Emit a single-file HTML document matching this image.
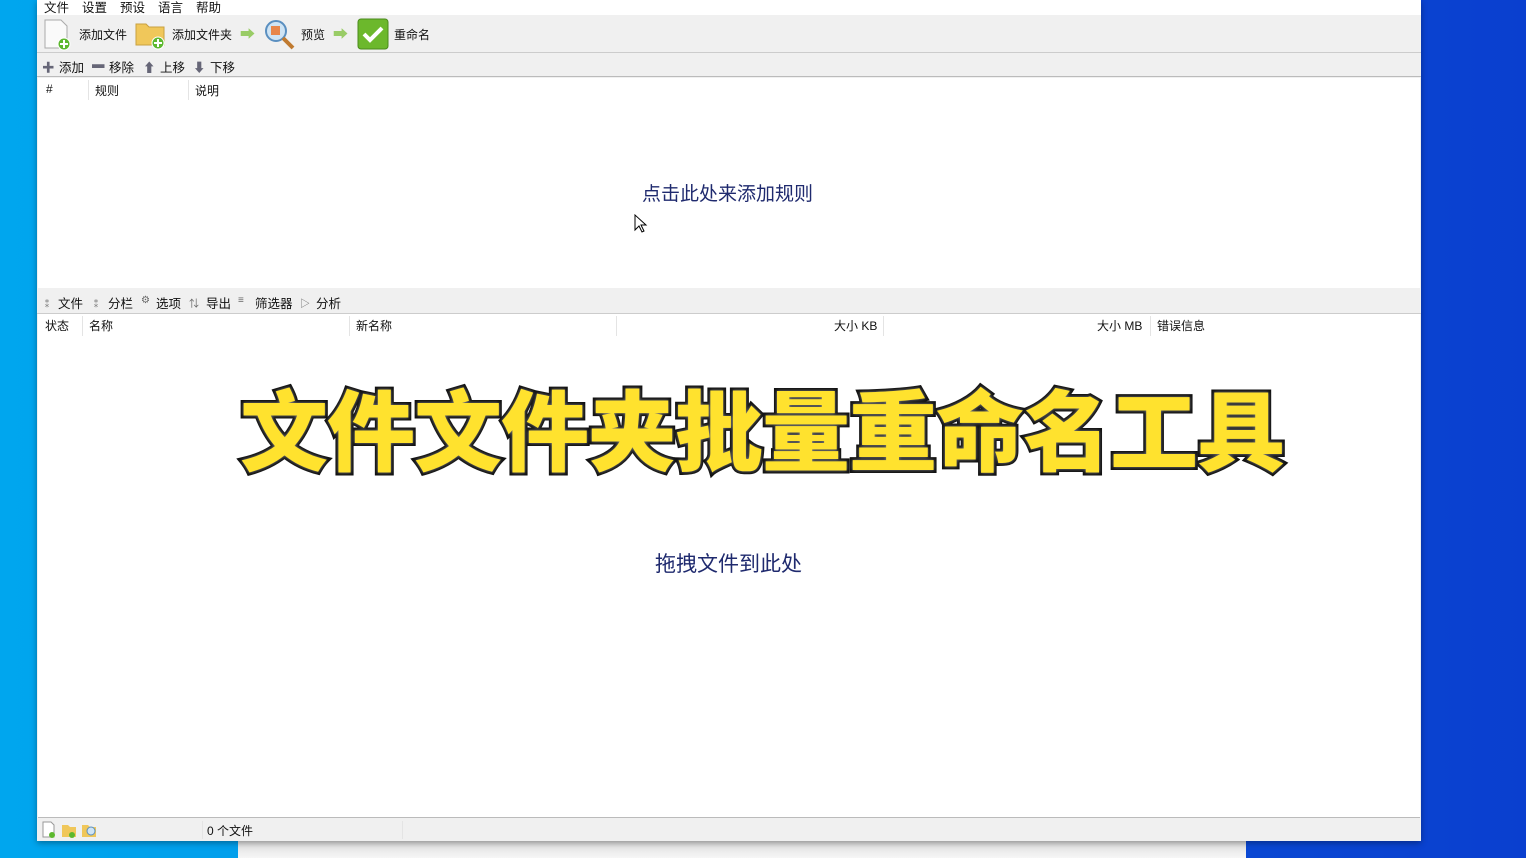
<!DOCTYPE html>
<html><head><meta charset="utf-8"><style>
*{margin:0;padding:0;box-sizing:border-box}
body{width:1526px;height:858px;overflow:hidden;position:relative;font-family:"Liberation Sans","Noto Sans CJK SC",sans-serif;font-size:12px;color:#111;background:linear-gradient(90deg,#00a6ee 0,#0390e6 700px,#0a4fd6 1000px,#0a3fcf 1526px)}
.win{position:absolute;left:37px;top:0;width:1384px;height:841px;background:#f0f0f0;box-shadow:0 2px 6px rgba(0,0,0,.35)}
.bottomw{position:absolute;left:238px;top:841px;width:1008px;height:17px;background:linear-gradient(#ddd,#f6f6f6)}
.menu{position:absolute;top:0;left:0;right:0;height:15px;background:#fff}
.menu span{position:absolute;top:-3px;font-size:12.5px}
.tb{position:absolute;top:15px;left:0;right:0;height:38px;border-bottom:1px solid #ccc}
.tb .t{position:absolute;top:11px;font-size:12px}
.tb2{position:absolute;top:54px;left:0;right:0;height:23px;border-bottom:1px solid #bbb}
.tb2 span{position:absolute;top:3px;font-size:12.5px}
.pane1{position:absolute;top:78px;left:1px;right:1px;height:210px;background:#fff}
.hdr span{position:absolute;top:4px;font-size:12px}
.sep{position:absolute;top:2px;width:1px;height:20px;background:#e4e4e4}
.tabs{position:absolute;top:290px;left:0;right:0;height:24px;border-bottom:1px solid #ccc}
.tabs span{position:absolute;top:3px;font-size:12.5px}
.pane2{position:absolute;top:314px;left:1px;right:1px;height:504px;background:#fff;border-bottom:1px solid #bbb}
.pane2 .hdr span{top:3px}
.status{position:absolute;top:819px;left:0;right:0;height:22px}
.ph{position:absolute;color:#1f2a6e;font-size:19px}
.title{position:absolute;left:240px;top:372px;font-size:88px;font-weight:900;color:#ffe22e;letter-spacing:-1px;font-family:"Noto Sans CJK SC",sans-serif;-webkit-text-stroke:6px #111;paint-order:stroke fill;text-shadow:0 0 3px #888;line-height:110px}
</style></head><body>
<div class="bottomw"></div>
<div class="win">
 <div class="menu"><span style="left:7px">文件</span><span style="left:45px">设置</span><span style="left:83px">预设</span><span style="left:121px">语言</span><span style="left:159px">帮助</span></div>
 <div class="tb">
  <svg style="position:absolute;left:6px;top:3px" width="30" height="34"><path d="M2 2h16l6 6v22H2z" fill="#fafafa" stroke="#aaa"/><circle cx="21" cy="26" r="6" fill="#5cb82e" stroke="#fff"/><path d="M21 22v8M17 26h8" stroke="#fff" stroke-width="2"/></svg>
  <span class="t" style="left:42px">添加文件</span>
  <svg style="position:absolute;left:98px;top:3px" width="32" height="32"><path d="M1 6h10l3 3h15v18H1z" fill="#f0c75a" stroke="#c9a040"/><circle cx="23" cy="25" r="6" fill="#5cb82e" stroke="#fff"/><path d="M23 21v8M19 25h8" stroke="#fff" stroke-width="2"/></svg>
  <span class="t" style="left:135px">添加文件夹</span>
  <span class="t" style="left:203px;color:#9c6;font-size:15px;top:8px">➡</span>
  <svg style="position:absolute;left:226px;top:3px" width="34" height="34"><circle cx="13" cy="13" r="10" fill="#cfe4f4" stroke="#5a8fc0" stroke-width="2"/><rect x="8" y="8" width="9" height="9" fill="#e8864a"/><path d="M20 20l10 10" stroke="#c07a30" stroke-width="4"/></svg>
  <span class="t" style="left:264px">预览</span>
  <span class="t" style="left:296px;color:#9c6;font-size:15px;top:8px">➡</span>
  <svg style="position:absolute;left:320px;top:3px" width="32" height="32"><rect x="1" y="1" width="30" height="30" rx="3" fill="#6cb82c" stroke="#4a8a1c"/><path d="M7 16l6 6 12-12" stroke="#fff" stroke-width="4" fill="none"/></svg>
  <span class="t" style="left:357px">重命名</span>
 </div>
 <div class="tb2"><span style="left:5px;color:#667">✚</span><span style="left:22px">添加</span><span style="left:55px;color:#667">▬</span><span style="left:72px">移除</span><span style="left:106px;color:#667">⬆</span><span style="left:123px">上移</span><span style="left:156px;color:#667">⬇</span><span style="left:173px">下移</span></div>
 <div class="pane1">
  <div class="hdr"><span style="left:8px">#</span><div class="sep" style="left:50px"></div><span style="left:57px">规则</span><div class="sep" style="left:150px"></div><span style="left:157px">说明</span></div>
  <div class="ph" style="left:604px;top:101px">点击此处来添加规则</div>
  <svg style="position:absolute;left:596px;top:136px" width="14" height="20"><path d="M1 1v15l4-4 3 6 2-1-3-6h5z" fill="#fff" stroke="#000"/></svg>
 </div>
 <div class="tabs"><span style="left:5px;color:#666;font-size:10px;top:5px">⁑</span><span style="left:21px">文件</span><span style="left:54px;color:#666;font-size:10px;top:5px">⁑</span><span style="left:71px">分栏</span><span style="left:104px;color:#666;font-size:10px;top:5px">⚙</span><span style="left:119px">选项</span><span style="left:152px;color:#666;font-size:10px;top:5px">⇅</span><span style="left:169px">导出</span><span style="left:201px;color:#666;font-size:10px;top:5px">≡</span><span style="left:218px">筛选器</span><span style="left:263px;color:#666;font-size:10px;top:5px">▷</span><span style="left:279px">分析</span></div>
 <div class="pane2">
  <div class="hdr"><span style="left:7px">状态</span><div class="sep" style="left:44px"></div><span style="left:51px">名称</span><div class="sep" style="left:311px"></div><span style="left:318px">新名称</span><div class="sep" style="left:578px"></div><span style="left:796px">大小 KB</span><div class="sep" style="left:845px"></div><span style="left:1059px">大小 MB</span><div class="sep" style="left:1112px"></div><span style="left:1119px">错误信息</span></div>
  <div class="ph" style="left:617px;top:234px;font-size:21px">拖拽文件到此处</div>
 </div>
 <div class="status">
  <svg style="position:absolute;left:4px;top:2px" width="60" height="18"><path d="M2 1h8l3 3v12H2z" fill="#fff" stroke="#999"/><circle cx="11" cy="14" r="3" fill="#5cb82e"/><path d="M21 4h6l2 2h6v10H21z" fill="#f0c75a"/><circle cx="31" cy="14" r="3" fill="#5cb82e"/><path d="M41 4h6l2 2h6v10H41z" fill="#f0c75a"/><circle cx="50" cy="10" r="4" fill="#cfe4f4" stroke="#5a8fc0"/></svg>
  <div class="sep" style="left:165px;height:18px"></div>
  <span style="position:absolute;left:170px;top:3px">0 个文件</span>
  <div class="sep" style="left:365px;height:18px"></div>
 </div>
</div>
<div class="title">文件文件夹批量重命名工具</div>
</body></html>
